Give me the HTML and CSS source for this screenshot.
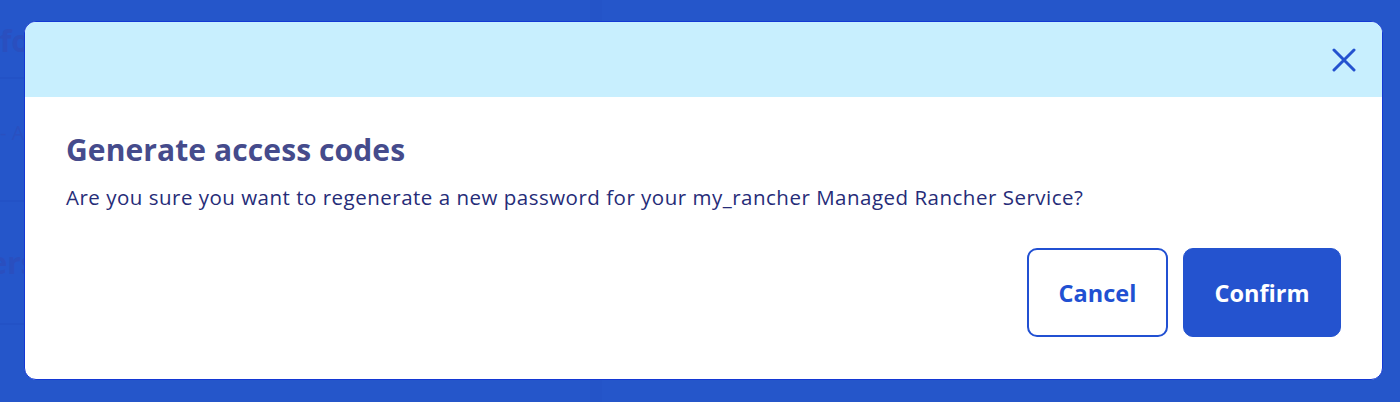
FILE: index.html
```html
<!DOCTYPE html>
<html lang="en">
<head>
  <meta charset="UTF-8" />
  <meta name="viewport" content="width=device-width, initial-scale=1" />
  <title>Generate access codes</title>
  <link rel="stylesheet" href="styles.css">
</head>
<body>

  <!-- page behind the dialog, dimmed by the overlay -->
  <div class="page">
    <div class="page-side">
      <div class="page-row row-head"><span class="page-title">Info</span></div>
      <div class="page-row row-mid"><span class="page-label">- A</span></div>
      <div class="page-row row-mid"><span class="page-title">Versi</span></div>
    </div>
    <div class="page-main"></div>
  </div>

  <div class="overlay">
    <div class="modal" role="dialog" aria-labelledby="modalTitle">
      <div class="modal-header">
        <button class="close-btn" aria-label="Close">
          <svg width="24" height="24" viewBox="0 0 24 24">
            <path d="M2 2L22 22M22 2L2 22" stroke="currentColor" stroke-width="3" stroke-linecap="round" fill="none"/>
          </svg>
        </button>
      </div>
      <div class="modal-body">
        <h2 id="modalTitle">Generate access codes</h2>
        <p>Are you sure you want to regenerate a new password for your my_rancher Managed Rancher Service?</p>
      </div>
      <div class="modal-footer">
        <button class="btn btn-outline">Cancel</button>
        <button class="btn btn-primary">Confirm</button>
      </div>
    </div>
  </div>

</body>
</html>
```

FILE: styles.css
```css
html, body {
  height: 100%;
  overflow: hidden;
}
body {
  margin: 0;
  font-family: "Open Sans", "Noto Sans", sans-serif;
  background: #2556ca;
  position: relative;
}

/* dimmed page */
.page {
  display: flex;
  height: 100%;
}
.page-side {
  width: 590px;
  border-right: 12px solid #2454c8;
}
.page-row {
  border-bottom: 2px solid #2352c6;
  box-sizing: border-box;
  white-space: nowrap;
  overflow: hidden;
}
.row-head {
  height: 79px;
  padding-top: 20px;
}
.row-mid {
  height: 123px;
  padding-top: 40px;
}
.page-title {
  font-size: 30px;
  font-weight: 700;
  color: #2a4fbf;
  margin-left: -30px;
}
.page-label {
  font-size: 20px;
  color: #2a50c0;
}
.page-main {
  flex: 1;
}

/* dialog */
.overlay {
  position: absolute;
  inset: 0;
  padding: 21px 17px 22px 24px;
}
.modal {
  height: 100%;
  box-sizing: border-box;
  background: #ffffff;
  border: 1px solid #1338d4;
  border-radius: 12px;
  overflow: hidden;
  display: flex;
  flex-direction: column;
}
.modal-header {
  height: 75px;
  background: #c8effe;
  display: flex;
  align-items: center;
  justify-content: flex-end;
  padding-right: 26px;
  flex-shrink: 0;
}
.close-btn {
  background: none;
  border: none;
  padding: 0;
  color: #2452cf;
  cursor: pointer;
  display: flex;
}
.modal-body {
  padding: 35px 41px 0;
}
.modal-body h2 {
  margin: 0;
  font-size: 30px;
  font-weight: 700;
  color: #454b8c;
  line-height: 36px;
  letter-spacing: 0.1px;
}
.modal-body p {
  margin: 16px 0 0;
  font-size: 20.5px;
  color: #262c78;
  line-height: 26px;
  letter-spacing: 0.5px;
}
.modal-footer {
  margin-top: auto;
  display: flex;
  justify-content: flex-end;
  gap: 15px;
  padding: 0 41px 42px;
}
.btn {
  height: 89px;
  border-radius: 10px;
  font-family: inherit;
  font-size: 23.5px;
  font-weight: 700;
  cursor: pointer;
  box-sizing: border-box;
}
.btn-outline {
  width: 141px;
  background: #ffffff;
  border: 2px solid #2150d2;
  color: #2150d2;
}
.btn-primary {
  width: 158px;
  background: #2453cf;
  border: 1px solid #2453cf;
  color: #ffffff;
}
```
